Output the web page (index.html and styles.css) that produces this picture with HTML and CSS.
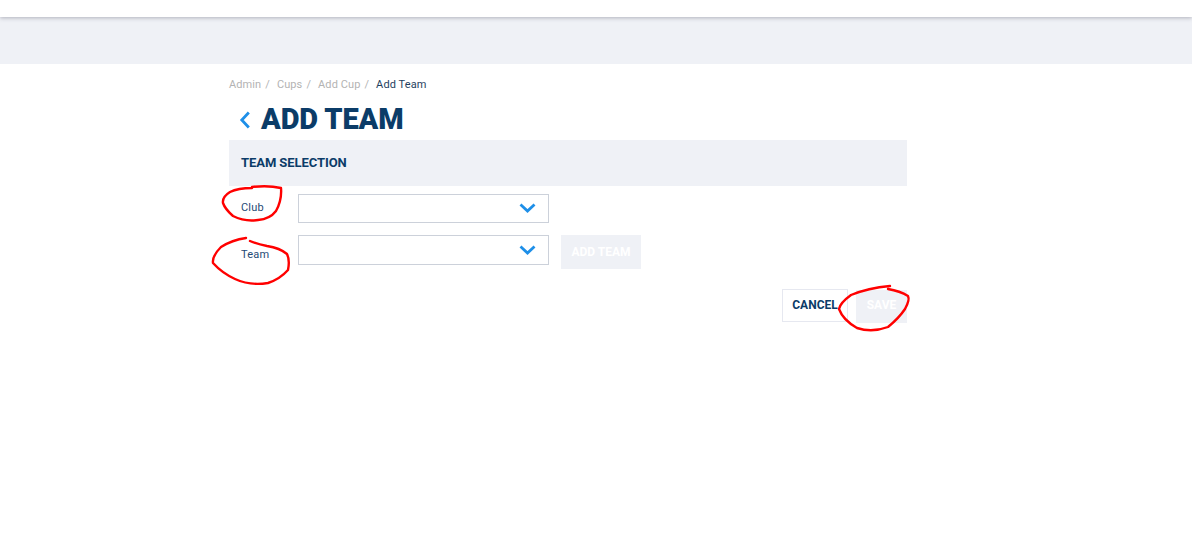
FILE: index.html
```html
<!DOCTYPE html>
<html lang="en">
<head>
<meta charset="utf-8">
<title>Add Team</title>
<link rel="stylesheet" href="styles.css">
</head>
<body>
<header class="topbar"></header>
<div class="band"></div>
<main class="content">
  <nav class="crumbs">
    <a class="crumb">Admin</a><span class="sep">/</span>
    <a class="crumb">Cups</a><span class="sep">/</span>
    <a class="crumb">Add Cup</a><span class="sep">/</span>
    <span class="crumb-current">Add Team</span>
  </nav>
  <div class="title-row">
    <svg class="back" width="12" height="18" viewBox="0 0 12 18"><path d="M9.8 1.5 L2.8 9 L9.8 16.5" fill="none" stroke="#1e8fe8" stroke-width="2.8"/></svg>
    <h1 class="title">ADD TEAM</h1>
  </div>
  <section class="panel-head">TEAM SELECTION</section>
  <div class="field field-club">
    <label class="field-label">Club</label>
    <div class="select select-club">
      <svg class="chev" width="17" height="10" viewBox="0 0 17 10"><path d="M1.5 1.5 L8.5 8 L15.5 1.5" fill="none" stroke="#1e8fe8" stroke-width="2.8"/></svg>
    </div>
  </div>
  <div class="field field-team">
    <label class="field-label">Team</label>
    <div class="select select-team">
      <svg class="chev" width="17" height="10" viewBox="0 0 17 10"><path d="M1.5 1.5 L8.5 8 L15.5 1.5" fill="none" stroke="#1e8fe8" stroke-width="2.8"/></svg>
    </div>
    <button class="btn-disabled btn-add" type="button">ADD TEAM</button>
  </div>
  <div class="actions">
    <button class="btn-cancel" type="button">CANCEL</button>
    <button class="btn-disabled btn-save" type="button">SAVE</button>
  </div>
</main>
<svg class="scribble" width="1192" height="554" viewBox="0 0 1192 554">
  <path d="M252 188 Q238 188 230 192 Q222 197 223 203 Q225 209 233 216 Q245 222 258 220 Q270 219 276 211 Q282 200 281 188 Q268 185 252 187"/>
  <path d="M246 238 Q232 240 221 247 Q212 256 213 263 Q222 273 235 279 Q250 286 268 283 Q280 279 288 270 Q290 260 287 254 Q280 248 267 246 Q257 244 250 241"/>
  <path d="M890 286 Q868 288 851 295 Q840 303 839 309 Q843 320 857 328 Q872 333 888 327 Q899 318 905 309 Q910 300 908 296 Q900 291 888 289"/>
</svg>
</body>
</html>
```
FILE: styles.css
```css
* { box-sizing: border-box; }
html, body { margin: 0; padding: 0; }
body {
  width: 1192px;
  height: 554px;
  overflow: hidden;
  background: #fff;
  font-family: Roboto, "Liberation Sans", sans-serif;
  color: #0b3c68;
  position: relative;
}
.topbar {
  height: 17px;
  background: #fff;
  box-shadow: 0 1px 4px rgba(60, 60, 80, .35);
  position: relative;
}
.band { height: 47px; background: #eff1f6; }
.content { width: 678px; margin-left: 229px; }
.crumbs {
  display: flex;
  height: 13px;
  margin-top: 14px;
  font-size: 11px;
  line-height: 13px;
  letter-spacing: .1px;
  white-space: nowrap;
}
.crumb { color: #b3b3b3; }
.sep { color: #b3b3b3; margin: 0 7px 0 4px; }
.crumb-current { color: #1f3f60; }
.title-row {
  display: flex;
  align-items: center;
  height: 34px;
  margin-top: 12px;
  padding-left: 10px;
}
.back { flex: none; }
.title {
  margin: -2px 0 0 10px;
  font-family: Roboto, sans-serif;
  font-size: 29px;
  line-height: 34px;
  font-weight: 900;
  color: #0b3c68;
  letter-spacing: -.1px;
}
.panel-head {
  height: 46px;
  margin-top: 3px;
  padding-left: 12px;
  background: #eff1f6;
  font-size: 13px;
  font-weight: 700;
  line-height: 46px;
  letter-spacing: -.07px;
  color: #0b3c68;
}
.field { display: flex; align-items: flex-start; }
.field-club { margin-top: 8px; }
.field-team { margin-top: 12px; }
.field-label {
  width: 69px;
  padding-left: 12px;
  font-size: 11px;
  letter-spacing: .2px;
  color: #1f4a75;
}
.field-club .field-label { line-height: 27px; }
.field-team .field-label { line-height: 40px; }
.select {
  width: 251px;
  background: #fff;
  border: 1px solid #ccd1da;
  display: flex;
  align-items: center;
  justify-content: flex-end;
  padding-right: 12px;
}
.select-club { height: 29px; }
.select-team { height: 30px; }
.chev { display: block; margin-top: -1px; }
.btn-disabled {
  border: 0;
  background: #eff1f6;
  color: #fff;
  font-family: Roboto, sans-serif;
  font-size: 12px;
  font-weight: 700;
  padding: 0;
}
.btn-add { width: 80px; height: 34px; margin-left: 12px; }
.actions {
  display: flex;
  justify-content: flex-end;
  align-items: flex-start;
  gap: 8px;
  margin-top: 14px;
}
.btn-cancel {
  width: 66px;
  height: 33px;
  border: 1px solid #e6e8f0;
  background: #fff;
  color: #0b3c68;
  font-family: Roboto, sans-serif;
  font-size: 12px;
  font-weight: 700;
  padding: 0 0 2px;
}
.btn-save { width: 51px; height: 33px; margin-top: 1px; padding-bottom: 3px; }
.scribble {
  position: absolute;
  left: 0;
  top: 0;
  pointer-events: none;
}
.scribble path { fill: none; stroke: #f00; stroke-width: 2.4; stroke-linecap: round; stroke-linejoin: round; }
```
